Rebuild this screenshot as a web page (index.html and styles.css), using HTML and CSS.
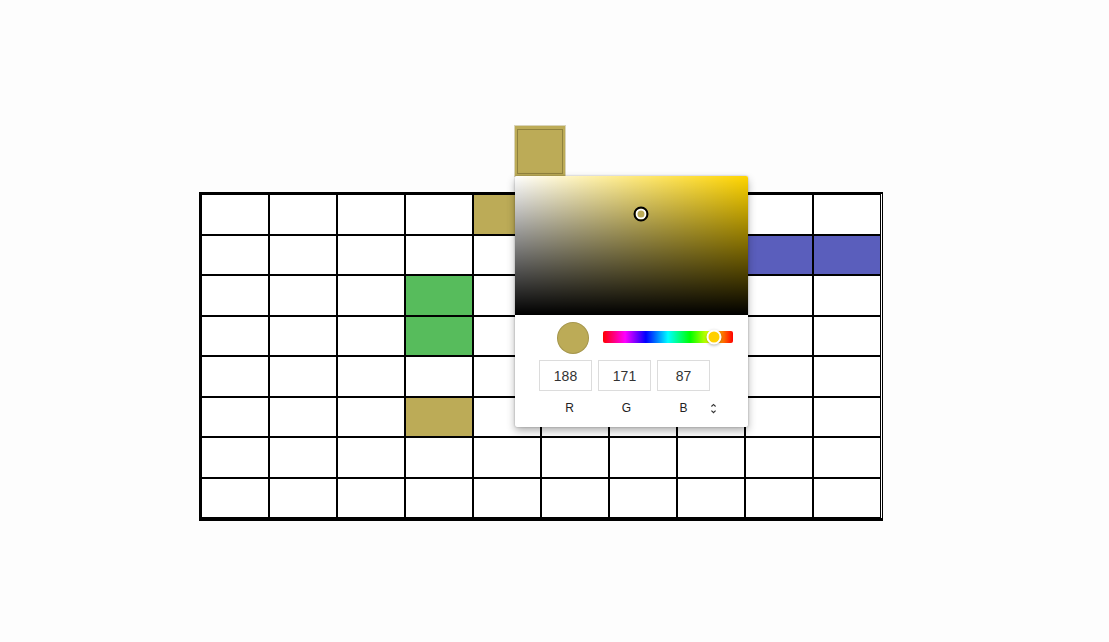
FILE: index.html
```html
<!DOCTYPE html>
<html>
<head>
<meta charset="utf-8">
<link rel="stylesheet" href="styles.css">
</head>
<body>
<div class="stage">
  <div class="board">
    <div class="cell"></div><div class="cell"></div><div class="cell"></div><div class="cell"></div><div class="cell khaki"></div><div class="cell"></div><div class="cell"></div><div class="cell"></div><div class="cell"></div><div class="cell"></div>
    <div class="cell"></div><div class="cell"></div><div class="cell"></div><div class="cell"></div><div class="cell"></div><div class="cell"></div><div class="cell"></div><div class="cell"></div><div class="cell blue"></div><div class="cell blue"></div>
    <div class="cell"></div><div class="cell"></div><div class="cell"></div><div class="cell green"></div><div class="cell"></div><div class="cell"></div><div class="cell"></div><div class="cell"></div><div class="cell"></div><div class="cell"></div>
    <div class="cell"></div><div class="cell"></div><div class="cell"></div><div class="cell green"></div><div class="cell"></div><div class="cell"></div><div class="cell"></div><div class="cell"></div><div class="cell"></div><div class="cell"></div>
    <div class="cell"></div><div class="cell"></div><div class="cell"></div><div class="cell"></div><div class="cell"></div><div class="cell"></div><div class="cell"></div><div class="cell"></div><div class="cell"></div><div class="cell"></div>
    <div class="cell"></div><div class="cell"></div><div class="cell"></div><div class="cell khaki"></div><div class="cell"></div><div class="cell"></div><div class="cell"></div><div class="cell"></div><div class="cell"></div><div class="cell"></div>
    <div class="cell"></div><div class="cell"></div><div class="cell"></div><div class="cell"></div><div class="cell"></div><div class="cell"></div><div class="cell"></div><div class="cell"></div><div class="cell"></div><div class="cell"></div>
    <div class="cell"></div><div class="cell"></div><div class="cell"></div><div class="cell"></div><div class="cell"></div><div class="cell"></div><div class="cell"></div><div class="cell"></div><div class="cell"></div><div class="cell"></div>
  </div>

  <div class="picker-anchor">
    <div class="swatch"><div class="swatch-inner"></div></div>
    <div class="popover">
      <div class="saturation">
        <div class="sat-pointer"></div>
      </div>
      <div class="picker-body">
        <div class="controls">
          <div class="preview"></div>
          <div class="hue">
            <div class="hue-pointer"></div>
          </div>
        </div>
        <div class="fields">
          <input class="field" type="text" value="188">
          <input class="field" type="text" value="171">
          <input class="field" type="text" value="87">
        </div>
        <div class="labels">
          <span class="label">R</span>
          <span class="label">G</span>
          <span class="label">B</span>
          <span class="toggle">
            <svg viewBox="0 0 24 24" width="13" height="13"><path fill="#333" d="M12,18.17L8.83,15L7.42,16.41L12,21L16.59,16.41L15.17,15M12,5.83L15.17,9L16.58,7.59L12,3L7.41,7.59L8.83,9L12,5.83Z"/></svg>
          </span>
        </div>
      </div>
    </div>
  </div>
</div>
</body>
</html>
```

FILE: styles.css
```css
html, body {
  margin: 0;
  padding: 0;
  background: #fdfdfd;
  font-family: "Liberation Sans", Arial, sans-serif;
}

.stage {
  position: relative;
  width: 1109px;
  height: 642px;
  padding: 192px 0 0 199px;
  box-sizing: border-box;
}

.board {
  display: grid;
  grid-template-columns: repeat(10, 68px);
  grid-auto-rows: 40.5px;
  width: max-content;
  border: 2px solid #000;
  border-left-width: 2px;
  border-bottom-width: 3px;
  background: #fff;
}

.cell {
  box-sizing: border-box;
  border: 1px solid #000;
  background: #fff;
}

.cell:nth-child(10n) {
  border-right-color: #000;
  box-shadow: 1px 0 0 #fff;
}

.cell.khaki { background: #bcab57; }
.cell.green { background: #57bc5c; }
.cell.blue { background: #5a5ebc; }

.picker-anchor {
  position: absolute;
  left: 515px;
  top: 126px;
}

.swatch {
  width: 50px;
  height: 50px;
  box-sizing: border-box;
  padding: 3px 2px 2px 2px;
  background: #bcab57;
  box-shadow: 0 0 0 1px rgba(150, 135, 60, 0.35);
}

.swatch-inner {
  width: 100%;
  height: 100%;
  box-sizing: border-box;
  border: 1px solid rgba(90, 80, 30, 0.45);
  background: #bcab57;
}

.popover {
  width: 233px;
  background: #fff;
  border-radius: 2px;
  box-shadow: 0 0 2px rgba(0, 0, 0, 0.3), 0 4px 8px rgba(0, 0, 0, 0.3);
}

.saturation {
  position: relative;
  height: 139px;
  border-radius: 2px 2px 0 0;
  background:
    linear-gradient(to top, #000, rgba(0, 0, 0, 0)),
    linear-gradient(to right, #fff, rgba(255, 255, 255, 0)),
    #ffd500;
}

.sat-pointer {
  position: absolute;
  left: 126px;
  top: 38px;
  width: 15px;
  height: 15px;
  box-sizing: border-box;
  transform: translate(-50%, -50%);
  border-radius: 50%;
  border: 2px solid #000;
  background: #bcab57;
  box-shadow: inset 0 0 0 2px #fff;
}

.picker-body {
  padding: 7px 15px 12px 16px;
}

.controls {
  display: flex;
  align-items: center;
  gap: 14px;
  padding-left: 26px;
}

.preview {
  width: 32px;
  height: 32px;
  border-radius: 50%;
  background: #bcab57;
  box-shadow: inset 0 0 0 1px rgba(0, 0, 0, 0.12);
  flex: none;
}

.hue {
  position: relative;
  width: 130px;
  height: 12px;
  margin-top: -2px;
  border-radius: 2px;
  background: linear-gradient(to left, #f00 0%, #ff0 17%, #0f0 33%, #0ff 50%, #00f 67%, #f0f 83%, #f00 100%);
}

.hue-pointer {
  position: absolute;
  left: 111px;
  top: 6px;
  width: 15px;
  height: 15px;
  box-sizing: border-box;
  transform: translate(-50%, -50%);
  border-radius: 50%;
  border: 2px solid #fff;
  background: #ffd000;
  box-shadow: 0 1px 3px rgba(0, 0, 0, 0.3);
}

.fields {
  display: flex;
  gap: 6px;
  margin-top: 6px;
  padding-left: 8px;
}

.field {
  width: 53px;
  height: 31px;
  box-sizing: border-box;
  margin: 0;
  padding: 0;
  border: 1px solid #dcdcdc;
  border-radius: 0;
  background: #fff;
  color: #333;
  font-family: "Liberation Sans", Arial, sans-serif;
  font-size: 14px;
  text-align: center;
  outline: none;
}

.labels {
  display: flex;
  align-items: center;
  margin-top: 10px;
  padding-left: 10px;
  height: 14px;
}

.label {
  width: 57px;
  text-align: center;
  font-size: 12px;
  color: #222;
}

.toggle {
  display: flex;
  align-items: center;
  margin-left: -5px;
  height: 14px;
}
```
